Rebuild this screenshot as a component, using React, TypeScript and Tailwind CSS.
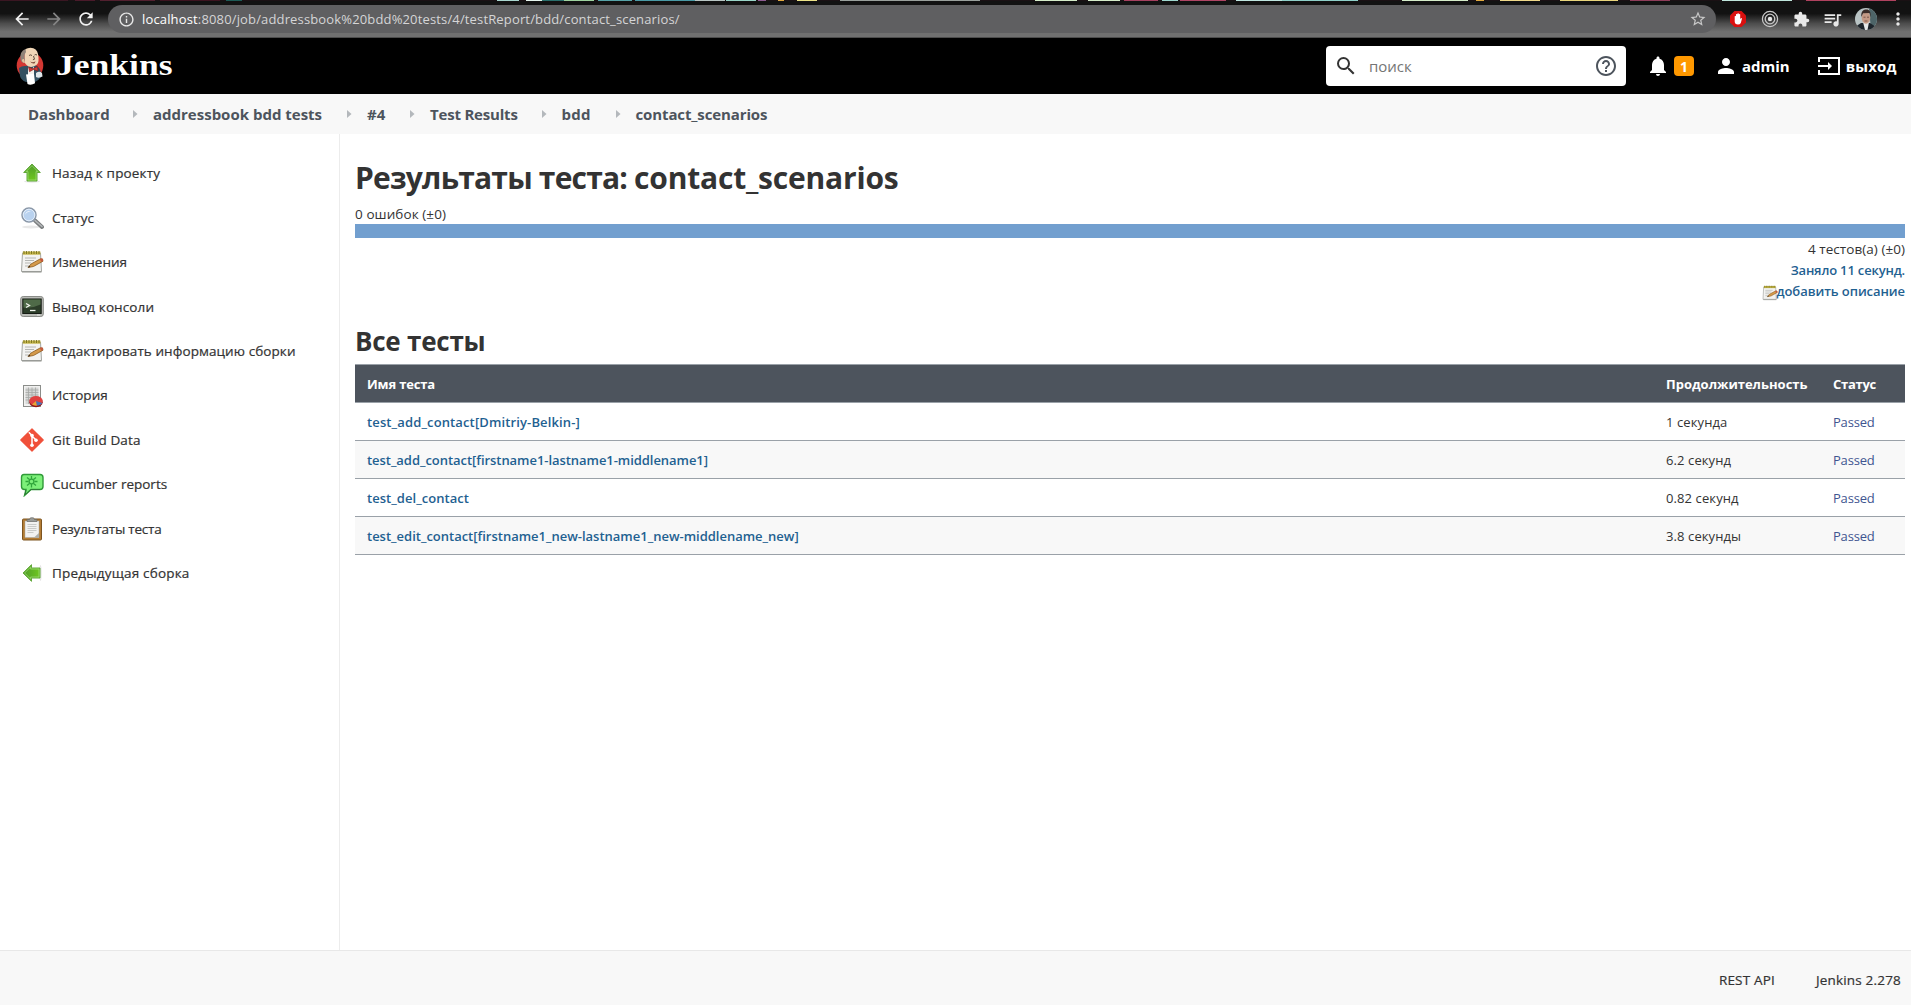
import type { ReactNode } from "react";
import {
  MdArrowBack,
  MdArrowForward,
  MdExtension,
  MdHelpOutline,
  MdInfoOutline,
  MdMoreVert,
  MdNotifications,
  MdPerson,
  MdQueueMusic,
  MdRefresh,
  MdSearch,
  MdStarBorder,
} from "react-icons/md";

/* ---------- Browser toolbar ---------- */

const wallpaper: [number, number, string][] = [
  [0, 68, "#3a1622"], [75, 20, "#4a1a2a"], [100, 55, "#52202f"], [160, 60, "#3d1420"], [226, 16, "#1d5a55"],
  [497, 22, "#a9d6cf"], [526, 16, "#e6f5ee"], [542, 22, "#2a6f6c"], [564, 30, "#9fd3a0"], [598, 34, "#57a3a8"],
  [635, 60, "#4a9aa6"], [695, 30, "#b9c6c4"], [726, 30, "#9ad5c8"], [758, 8, "#8e5c92"], [778, 6, "#e0a940"],
  [797, 20, "#ece388"], [840, 140, "#9aa09c"], [1035, 42, "#d5ecc9"], [1088, 32, "#d5ecc9"], [1124, 34, "#a5405f"],
  [1162, 16, "#9fd8cf"], [1180, 46, "#b04565"], [1236, 46, "#bfe6e0"], [1282, 76, "#8fd0c9"], [1402, 66, "#d5ecc9"],
  [1476, 8, "#e0a940"], [1500, 40, "#efd98a"], [1560, 58, "#e9d57c"], [1630, 40, "#8f3d5a"], [1722, 70, "#bfe6dc"],
  [1806, 90, "#b0425f"],
];

const WallpaperEdge = () => (
  <svg className="block h-px w-full bg-[#1a1114]" viewBox="0 0 1911 1" preserveAspectRatio="none">
    {wallpaper.map(([x, w, fill]) => (
      <rect key={x} x={x} y={0} width={w} height={1} fill={fill} />
    ))}
  </svg>
);

const AdBlockIcon = () => (
  <svg className="size-[18px]" viewBox="0 0 18 18">
    <path d="M5.500 1h7L17 5.500v7L12.500 17h-7L1 12.500v-7z" fill="#d9100f" />
    <path
      d="M5.700 9.600 V6.200 q.7-.7 1.300 0 V4.300 q.7-.7 1.400 0 V3.600 q.7-.7 1.400 0 V4.300 q.7-.6 1.400 0 V9.300 l.6-1 q.9-.5 1.200.3 L11.800 13 Q11 14.600 9 14.600 Q5.700 14.400 5.700 11.500z"
      fill="#fff"
    />
  </svg>
);

const TargetIcon = () => (
  <svg className="size-[18px]" viewBox="0 0 18 18" fill="none" stroke="#c9c9c9">
    <circle cx="9" cy="9" r="7.600" strokeWidth="1.200" />
    <circle cx="9" cy="9" r="4.800" strokeWidth="1.300" />
    <circle cx="9" cy="9" r="2.200" fill="#e8e8e8" stroke="none" />
  </svg>
);

const Avatar = () => (
  <svg className="size-[22px] rounded-full" viewBox="0 0 22 22">
    <rect width="22" height="22" fill="#b9c3c4" />
    <path d="M14 0h8v22h-6z" fill="#4d6468" />
    <path d="M0 22v-3l6-4h9l6 4v3z" fill="#1d242b" />
    <path d="M8 14h6l-1.500 8H10z" fill="#e6e9ea" />
    <ellipse cx="11" cy="9.800" rx="4.300" ry="6" fill="#c49a85" />
    <path d="M6.300 9C5.800 3 8.500 1.500 11.500 1.500S16.200 4 15.600 9l-1-4-6.500.2z" fill="#3a2c27" />
    <path d="M8.500 9.200h2M12 9.200h2M9.500 13h3" stroke="#6b4538" strokeWidth=".8" />
  </svg>
);

const BrowserBar = () => (
  <div className="h-[38px] bg-[#141414]">
    <WallpaperEdge />
    <div className="flex h-[37px] items-center border-b border-[#4c4c4c] bg-linear-to-b from-[#121212] from-35% via-[#4c4c4c] via-62% to-[#707070] to-85%">
      <div className="flex w-[108px] shrink-0 items-center gap-[12px] pl-[12px] text-[20px] text-[#f1f1f1]">
        <MdArrowBack />
        <MdArrowForward className="text-[#858585]" />
        <MdRefresh />
      </div>
      <div className="flex h-[28px] w-[1608px] shrink-0 items-center rounded-full bg-[#5f5f61] pr-[9px] pl-[10px] text-[#d5d5d6]">
        <MdInfoOutline className="size-[17px] text-[#e8e8e8]" />
        <span className="ml-[7px] flex-1 pt-px font-['Open_Sans',sans-serif] text-[13px] tracking-[0.15px]">
          <span className="text-white">localhost</span>
          :8080/job/addressbook%20bdd%20tests/4/testReport/bdd/contact_scenarios/
        </span>
        <MdStarBorder className="size-[18px] text-[#c8c8c8]" />
      </div>
      <div className="flex flex-1 items-center pl-[13px] text-[#e9e9e9]">
        <AdBlockIcon />
        <span className="ml-[14px]"><TargetIcon /></span>
        <MdExtension className="ml-[14px] size-[17px]" />
        <MdQueueMusic className="ml-[12px] size-[21px]" />
        <span className="ml-[12px]"><Avatar /></span>
        <MdMoreVert className="ml-[11px] size-[20px] shrink-0" />
      </div>
    </div>
  </div>
);

/* ---------- Jenkins header ---------- */

const JenkinsLogo = () => (
  <svg className="h-[40px] w-[30px]" viewBox="0 0 30 40">
    <circle cx="15" cy="19.500" r="13.300" fill="#d33833" />
    <path d="M4 22 Q7 19.500 11 20 L19 19 Q24 20 25.500 25 L26 31 Q24 34 20 36 L11 36 Q6 34 5 30z" fill="#335061" />
    <path d="M13 20.500l3 4 3-4v14h-6z" fill="#f4f1ec" />
    <path d="M9.500 6 Q9 2 15.500 1.700 Q22 2 23 8 Q24.500 16 22 18.500 Q18 22 13.500 20.500 Q9 17.500 9.500 14z" fill="#f0d6b7" />
    <path d="M5.500 13 Q4.500 5.500 10.500 3 L11 6 Q8.500 9 10 14 L9 17 Q6 16.500 5.500 13z" fill="#8e8379" />
    <path d="M9 13q-2.500-.5-2 2 .5 2 3 2z" fill="#e3bf9b" />
    <path d="M14 9.500q1.500-1.200 3 0M19.500 9q1.200-1 2.500 0M18.500 10l1 3.200-1.600.6" fill="none" stroke="#3c2c22" strokeWidth=".8" />
    <path d="M15 15.500q3 1.400 5.500-.2l-.8 1.900q-2.500.8-4.700-1.700z" fill="#7d4a38" />
    <path d="M13.500 21l4.500 1.800 4.500-2.300.5 4.500-4.500-1.500-4 2.200z" fill="#d33833" stroke="#7b1d1a" strokeWidth=".6" />
    <path d="M11 28.500l8-.7 1 9.500q-4 2.500-7.500.8z" fill="#fff" />
    <path d="M21 27q3.500-2.500 6 0l.5 3.500q-3.500 2-6.500.5z" fill="#dfe6ea" />
  </svg>
);

const LogoutIcon = () => (
  <svg className="h-[20px] w-[24px]" viewBox="0 0 24 20" fill="none" stroke="#fff" strokeWidth="2">
    <path d="M2 6V2h20v16H2v-4" />
    <path d="M1 10h12" />
    <path d="M11 6l4 4-4 4z" fill="#fff" stroke="none" />
  </svg>
);

const Header = () => (
  <header className="flex h-[56px] items-center bg-black text-white">
    <div className="flex w-[1326px] items-center pl-[15px]">
      <JenkinsLogo />
      <span className="ml-[11px] origin-left scale-x-[1.185] pb-[2px] font-['Liberation_Serif',serif] text-[30px] leading-[40px] font-bold">
        Jenkins
      </span>
    </div>
    <div className="flex h-[40px] w-[300px] items-center rounded-[4px] bg-white pr-[8px] pl-[8px]">
      <MdSearch className="size-[24px] text-[#333]" />
      <span className="ml-[11px] flex-1 text-[15px] text-[#757575]">поиск</span>
      <MdHelpOutline className="size-[24px] text-[#4d545d]" />
    </div>
    <div className="flex flex-1 items-center">
      <MdNotifications className="ml-[20px] size-[24px]" />
      <span className="ml-[4px] flex size-[20px] items-center justify-center rounded-[4px] bg-[#ff9800] text-[14px] font-bold">
        1
      </span>
      <MdPerson className="ml-[20px] size-[24px]" />
      <span className="ml-[4px] text-[15px] font-bold">admin</span>
      <span className="ml-[27px]"><LogoutIcon /></span>
      <span className="ml-[5px] text-[15px] font-bold tracking-[0.18px]">выход</span>
    </div>
  </header>
);

/* ---------- Breadcrumbs ---------- */

const Chevron = () => (
  <svg className="h-[8px] w-[5px]" viewBox="0 0 5 8">
    <path d="M0 0l4.500 4L0 8z" fill="#b4b8bc" />
  </svg>
);

const crumbs: [string, string][] = [
  ["Dashboard", "w-[105px]"],
  ["addressbook bdd tests", "w-[194px]"],
  ["#4", "w-[43px]"],
  ["Test Results", "w-[111.5px] tracking-[-0.2px]"],
  ["bdd", "w-[54px] tracking-[0.3px]"],
  ["contact_scenarios", "tracking-[-0.12px]"],
];

const Breadcrumbs = () => (
  <nav className="flex h-[40px] items-center bg-[#f8f8f8] pl-[28px] text-[15px] font-bold text-[#4d545d]">
    {crumbs.map(([label, cls], i) => (
      <div key={label} className="flex items-center">
        {i > 0 && <span className="w-[20px]"><Chevron /></span>}
        <span className={cls}>{label}</span>
      </div>
    ))}
  </nav>
);

/* ---------- Sidebar ---------- */

const ArrowUpIcon = ({ className = "" }: { className?: string }) => (
  <svg className={`size-[24px] ${className}`} viewBox="0 0 24 24">
    <defs>
      <linearGradient id="leaf" x1="0" y1="0" x2="0" y2="1">
        <stop offset="0" stopColor="#4f9c2a" />
        <stop offset="1" stopColor="#6fc81f" />
      </linearGradient>
    </defs>
    <ellipse cx="12" cy="20.500" rx="8" ry="1.200" fill="#e6e6e6" />
    <path d="M12 3l8.300 8.500h-3.300v8.500H7v-8.500H3.700z" fill="url(#leaf)" stroke="#63a83c" strokeWidth="1" strokeLinejoin="round" />
    <path d="M12 4.600l5.900 6H16V19H8v-8.400H6.100z" fill="none" stroke="#a5dc7c" strokeWidth=".7" />
  </svg>
);

const MagnifierIcon = () => (
  <svg className="size-[24px]" viewBox="0 0 24 24">
    <ellipse cx="11" cy="21" rx="9" ry="1.500" fill="#e8e8e8" />
    <path d="M15 14.500l7 6.500" stroke="#7c7f80" strokeWidth="4" strokeLinecap="round" />
    <path d="M15 14.500l7 6" stroke="#b5b8ba" strokeWidth="1.500" strokeLinecap="round" />
    <circle cx="9" cy="9" r="7" fill="#b9d2ef" stroke="#8b98a8" strokeWidth="1.500" />
    <circle cx="9" cy="9" r="5.800" fill="none" stroke="#e8f0fa" strokeWidth=".9" />
    <path d="M5 9q1-4.500 6-4-5 1-6 4z" fill="#fff" />
  </svg>
);

const NotepadIcon = ({ className = "size-[24px]" }: { className?: string }) => (
  <svg className={className} viewBox="0 0 24 24">
    <path d="M2.500 3h18l1 18.500h-20z" fill="#f3f3f1" stroke="#a4a6a1" strokeWidth="1" />
    <path d="M2 22h19.500" stroke="#8f918c" strokeWidth="1" />
    <path d="M2.800 1.500h17.600v3.200H2.800z" fill="#c4b548" />
    <path d="M4 1v3M6.500 1v3M9 1v3M11.500 1v3M14 1v3M16.500 1v3M19 1v3" stroke="#77701f" strokeWidth=".9" />
    <path d="M5 8h11M5 10.500h9M5 13h6M5 16h5" stroke="#b5b6b3" strokeWidth="1" />
    <path d="M8 17.500l3-3.500 9-5 2.500 0 .5 2.200-9.500 5.300z" fill="#d59a4a" stroke="#8a5a1e" strokeWidth=".8" />
    <path d="M20 8.500l2.500 0 .5 2.200-2 1.300z" fill="#c8553d" />
    <path d="M8 17.500l1.300-1.800.9 1.200z" fill="#222" />
  </svg>
);

const TerminalIcon = () => (
  <svg className="size-[24px]" viewBox="0 0 24 24">
    <rect x=".7" y="1.500" width="22.600" height="20" rx="2.500" fill="#b9bbb6" stroke="#8a8c88" strokeWidth="1" />
    <rect x="2.800" y="4" width="18.400" height="14.500" fill="#2c3d29" stroke="#151b13" strokeWidth="1" />
    <path d="M3.500 4.500h17v5q-8 4-17 3z" fill="#4f6a48" />
    <path d="M6 8.500l3.500 2-3.500 2" fill="none" stroke="#f2f5ef" strokeWidth="1.300" />
    <path d="M10 15.500h5.500" stroke="#f2f5ef" strokeWidth="1.300" />
    <path d="M17 20h3" stroke="#e9e9e9" strokeWidth="1" />
  </svg>
);

const HistoryIcon = () => (
  <svg className="size-[24px]" viewBox="0 0 24 24">
    <rect x="3.500" y="1.500" width="17" height="21" fill="#f1f1f0" stroke="#8b8d8a" strokeWidth="1" />
    <path d="M5.500 3.500h13v16.500h-13z" fill="#d6d7d6" />
    <path d="M5.500 6h13M5.500 8.500h13M5.500 11h13M5.500 13.500h13M5.500 16h13M8.500 3.500V20M12 3.500V20M15.500 3.500V20" stroke="#a5a7a5" strokeWidth=".8" />
    <ellipse cx="16" cy="18.200" rx="6.700" ry="5" fill="#8f1616" />
    <ellipse cx="16" cy="16.800" rx="6.700" ry="4.800" fill="#e04141" />
    <path d="M16 17l1 4.600q-3 .2-5-1z" fill="#e8a534" />
    <path d="M16 17l6.200 2q-1 2.400-5.200 2.600z" fill="#4974b8" />
  </svg>
);

const GitIcon = () => (
  <svg className="size-[24px]" viewBox="0 0 24 24">
    <path d="M12 .8L23.200 12 12 23.200.8 12z" fill="#f0503a" stroke="#f0503a" strokeWidth="1.200" strokeLinejoin="round" />
    <path d="M8.800 4.300L12 7.500v9.500M12 8l4 4" fill="none" stroke="#fff" strokeWidth="1.500" />
    <circle cx="12" cy="7.600" r="1.800" fill="#fff" />
    <circle cx="12" cy="17.200" r="1.800" fill="#fff" />
    <circle cx="16" cy="12.200" r="1.800" fill="#fff" />
  </svg>
);

const CucumberIcon = () => (
  <svg className="size-[24px]" viewBox="0 0 24 24">
    <path d="M4 1.500h16q3 0 3 3v9q0 3-3 3h-9L4.500 22.500 6 16.500H4.500q-3 0-3-3v-9q0-3 2.500-3z" fill="#7df07a" stroke="#2f9a38" strokeWidth="1.400" />
    <path d="M6 17l-1 5 6-5.500h9" fill="none" stroke="#2d7d36" strokeWidth="1" />
    <g stroke="#2fa63b" strokeWidth="1.300" fill="none">
      <circle cx="11.500" cy="8.500" r="2.400" />
      <path d="M11.500 3v3M11.500 11v3.500M5.500 8.500h3M14.500 8.500h3M7 4.500l2.500 2M16 4.500l-2.500 2M7 12.500l2.500-2M16 12.500l-2.500-2" />
    </g>
  </svg>
);

const ClipboardIcon = () => (
  <svg className="size-[24px]" viewBox="0 0 24 24">
    <rect x="2.500" y="2" width="19" height="21" rx="1" fill="#b47d35" stroke="#7d5420" strokeWidth="1" />
    <path d="M5 4h14v16.500H5z" fill="#f2f2f1" stroke="#a9a9a6" strokeWidth=".5" />
    <path d="M7.500 7.500h9M7.500 9.500h9M7.500 11.500h9M7.500 13.500h9M7.500 15.500h6" stroke="#c9cac8" strokeWidth="1" />
    <path d="M14 20.500l5-4.500v4.500z" fill="#aeb0ad" />
    <path d="M7 4.500V2.500h2.500L10.500.8h3l1 1.700H17v2z" fill="#9a9c99" stroke="#6a6c69" strokeWidth=".7" />
  </svg>
);

const tasks: [string, ReactNode, string][] = [
  ["Назад к проекту", <ArrowUpIcon />, "tracking-[0.17px]"],
  ["Статус", <MagnifierIcon />, "tracking-normal"],
  ["Изменения", <NotepadIcon />, "tracking-normal"],
  ["Вывод консоли", <TerminalIcon />, "tracking-[0.1px]"],
  ["Редактировать информацию сборки", <NotepadIcon />, "tracking-[0.08px]"],
  ["История", <HistoryIcon />, "tracking-[0.04px]"],
  ["Git Build Data", <GitIcon />, "tracking-[0.13px]"],
  ["Cucumber reports", <CucumberIcon />, "tracking-normal"],
  ["Результаты теста", <ClipboardIcon />, "tracking-[-0.22px]"],
  ["Предыдущая сборка", <ArrowUpIcon className="-rotate-90" />, "tracking-[0.19px]"],
];

const Sidebar = () => (
  <aside className="w-[340px] shrink-0 border-r border-[#ececec] pt-[17px]">
    {tasks.map(([label, icon, cls]) => (
      <a key={label} className="flex h-[44.480px] items-center pl-[20px] text-[13.5px] text-[#333]">
        {icon}
        <span className={`ml-[8px] [-webkit-text-stroke:0.2px_#333] ${cls}`}>{label}</span>
      </a>
    ))}
  </aside>
);

/* ---------- Report ---------- */

const tests: [string, string, string][] = [
  ["test_add_contact[Dmitriy-Belkin-]", "1 секунда", "tracking-[0.13px]"],
  ["test_add_contact[firstname1-lastname1-middlename1]", "6.2 секунд", "tracking-[-0.05px]"],
  ["test_del_contact", "0.82 секунд", "tracking-[0.04px]"],
  ["test_edit_contact[firstname1_new-lastname1_new-middlename_new]", "3.8 секунды", "tracking-[-0.01px]"],
];

const Report = () => (
  <main className="flex-1 pr-[6px] pl-[15px] text-[#333]">
    <h1 className="mt-[24px] h-[40px] text-[30px] leading-[40px] font-bold tracking-[-0.8px]">
      Результаты теста: <span className="tracking-[-0.2px]">contact_scenarios</span>
    </h1>
    <div className="mt-[6px] h-[20px] text-[13.5px] leading-[20px] tracking-[0.08px]">0 ошибок (±0)</div>
    <div className="h-[14px] bg-[#729fcf]" />
    <div className="flex flex-col items-end pt-px text-[13px] leading-[21px]">
      <span className="text-[13.5px] tracking-[0.05px]">4 тестов(а) (±0)</span>
      <a className="font-semibold tracking-[-0.17px] text-[#1f6191]">Заняло 11 секунд.</a>
      <a className="flex font-semibold tracking-[-0.07px] text-[#1f6191]">
        <NotepadIcon className="mt-[4px] -mr-px size-[16px] shrink-0" />
        добавить описание
      </a>
    </div>
    <h2 className="mt-[19px] h-[40px] text-[26px] leading-[40px] font-bold tracking-[-0.24px]">Все тесты</h2>
    <table className="mt-[3px] w-full table-fixed border-collapse text-left text-[13px]">
      <colgroup>
        <col />
        <col className="w-[167px]" />
        <col className="w-[84px]" />
      </colgroup>
      <thead>
        <tr className="h-[38px] border-y border-[#9aa1a8] bg-[#4d545d] text-white">
          <th className="pt-[2px] pl-[12px] font-bold tracking-[-0.15px]">Имя теста</th>
          <th className="pt-[2px] pl-[12px] font-bold">Продолжительность</th>
          <th className="pt-[2px] pl-[12px] font-bold tracking-[-0.27px]">Статус</th>
        </tr>
      </thead>
      <tbody>
        {tests.map(([name, time, cls]) => (
          <tr key={name} className="h-[38px] border-b border-[#9aa1a8] even:bg-[#f8f8f8]">
            <td className={`pt-[2px] pl-[12px] font-semibold text-[#1f6191] ${cls}`}>{name}</td>
            <td className="pt-[2px] pl-[12px] tracking-[0.1px]">{time}</td>
            <td className="pt-[2px] pl-[12px] tracking-[-0.2px] text-[#3f5590]">Passed</td>
          </tr>
        ))}
      </tbody>
    </table>
  </main>
);

export default function App() {
  return (
    <div className="flex h-[1005px] w-[1911px] flex-col overflow-hidden bg-white font-['Open_Sans','Noto_Sans',sans-serif]">
      <BrowserBar />
      <Header />
      <Breadcrumbs />
      <div className="flex min-h-0 flex-1">
        <Sidebar />
        <Report />
      </div>
      <footer className="flex h-[55px] items-center justify-end border-t border-[#e8e8e8] bg-[#f8f8f8] pt-[5px] pr-[10px] text-[13.5px] text-[#333] [-webkit-text-stroke:0.2px_#333]">
        <span className="tracking-[0.17px]">REST API</span>
        <span className="ml-[41px] tracking-[0.19px]">Jenkins 2.278</span>
      </footer>
    </div>
  );
}
